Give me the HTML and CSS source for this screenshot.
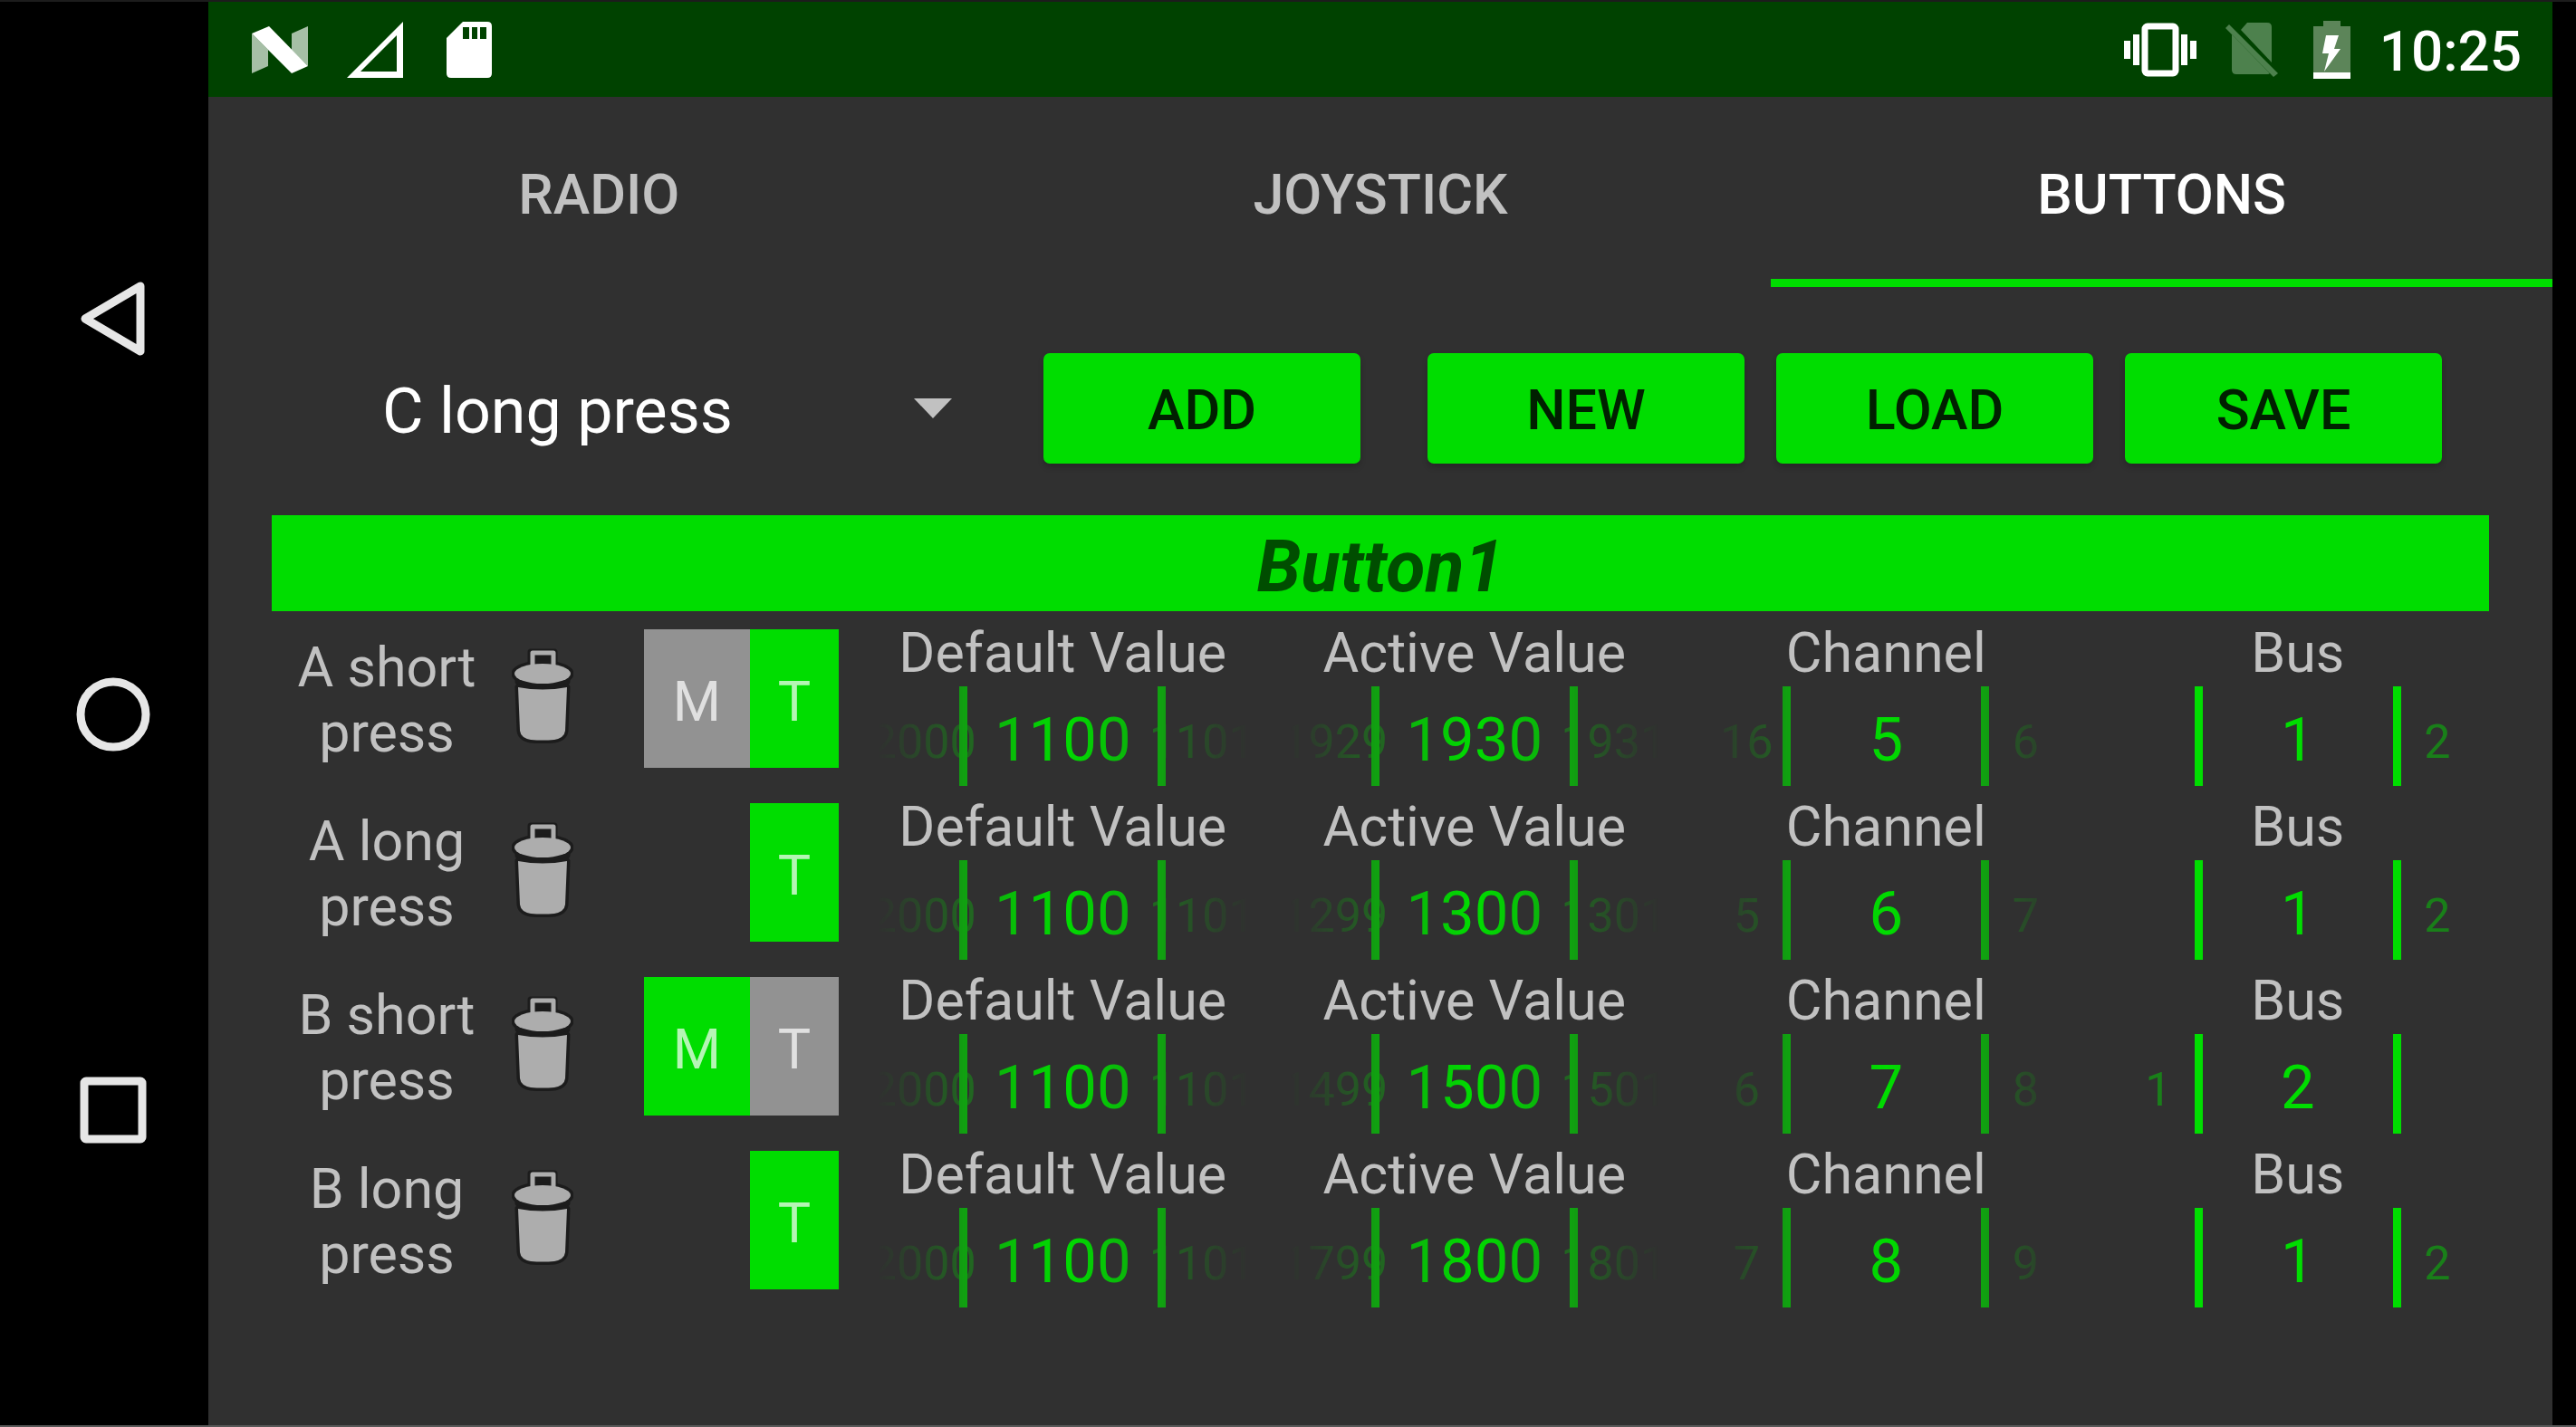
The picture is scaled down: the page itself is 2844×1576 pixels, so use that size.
FILE: index.html
```html
<!DOCTYPE html>
<html lang="en">
<head>
<meta charset="utf-8">
<title>Buttons</title>
<link rel="stylesheet" href="styles.css">
</head>
<body>
<svg class="defs" width="0" height="0" aria-hidden="true">
  <symbol id="trash" viewBox="0 0 68 108">
    <g stroke="#1c1c1c" stroke-width="7" fill="#1c1c1c" stroke-linejoin="round">
      <path d="M21 6h26v20H21z"/>
      <ellipse cx="34" cy="30" rx="31" ry="11"/>
      <path d="M7 29v10q27 10 54 0V29z"/>
      <path d="M7 45q27 6 54 0l-2 48q-1 8-12 10-13 1-26 0-11-2-12-10z"/>
    </g>
    <path d="M23 21V7h23v14" fill="none" stroke="#adadad" stroke-width="5" stroke-linejoin="round"/>
    <ellipse cx="34" cy="30" rx="31" ry="11" fill="#adadad"/>
    <path d="M7 45q27 5 54 0l-2 48q-1 8-12 10-13 1-26 0-11-2-12-10z" fill="#adadad"/>
  </symbol>
</svg>
<div class="device">
  <nav class="sysnav" aria-label="System">
    <button class="sysnav-btn" aria-label="Back"><svg width="84" height="84" viewBox="0 0 84 84"><path d="M72 6L11 42L72 78Z"/></svg></button>
    <button class="sysnav-btn" aria-label="Home"><svg width="84" height="84" viewBox="0 0 84 84"><circle cx="42" cy="42" r="36"/></svg></button>
    <button class="sysnav-btn" aria-label="Recent apps"><svg width="84" height="84" viewBox="0 0 84 84"><rect x="10" y="10" width="64" height="64" rx="2"/></svg></button>
  </nav>
  <div class="screen">
    <header class="status">
      <svg class="i-n" width="62" height="52" viewBox="0 0 62 52"><path d="M0 8L18 26V44L0 52zM44 8L62 0V44L44 26z" fill="#a6bfa6"/><path d="M0 8L19 0L62 44L44 52z" fill="#fff"/></svg>
      <svg class="i-sig" width="62" height="62" viewBox="0 0 62 62"><path d="M62 0V62H0zM55 15L15 55H55z" fill="#fff" fill-rule="evenodd"/></svg>
      <svg class="i-sd" width="50" height="62" viewBox="0 0 50 62"><path d="M18 0H45Q50 0 50 5V57Q50 62 45 62H5Q0 62 0 57V18zM18 6V19H25V6zM28 6V19H34V6zM37 6V19H44V6z" fill="#fff" fill-rule="evenodd"/></svg>
      <span class="spacer"></span>
      <svg class="i-vib" width="80" height="60" viewBox="0 0 80 60"><g fill="#fff"><rect x="0" y="20" width="7" height="20"/><rect x="10" y="13" width="7" height="34"/><rect x="63" y="13" width="7" height="34"/><rect x="73" y="20" width="7" height="20"/></g><rect x="23" y="4" width="34" height="52" rx="3" fill="none" stroke="#fff" stroke-width="7"/></svg>
      <svg class="i-sim" width="58" height="60" viewBox="0 0 58 60"><g fill="#4d814d"><path d="M17 8L24 0H46Q51 0 51 5V44z"/><path d="M7 13L49 56Q48 57 46 57H12Q7 57 7 52z"/><path d="M0 6L4 2L58 56L53 60z"/></g></svg>
      <svg class="i-bat" width="41" height="64" viewBox="0 0 41 64"><path d="M11 0H30V6H41V57H0V6H11z" fill="#5c8559"/><path d="M0 57H41V64H0z" fill="#fff"/><path d="M14 16H28L23 31H30L12 56L17 36H10z" fill="#fff"/></svg>
      <time class="clock">10:25</time>
    </header>
    <nav class="tabs" role="tablist">
      <button class="tab" role="tab">RADIO</button>
      <button class="tab" role="tab">JOYSTICK</button>
      <button class="tab tab-on" role="tab" aria-selected="true">BUTTONS</button>
    </nav>
    <main>
      <div class="toolbar">
        <div class="picker">
          <select class="select" aria-label="Button action"><option>C long press</option></select>
          <svg class="caret" width="42" height="22" viewBox="0 0 42 22"><path d="M0 0H42L21 22z" fill="#c1c1c1"/></svg>
        </div>
        <button class="btn btn-add">ADD</button>
        <button class="btn">NEW</button>
        <button class="btn">LOAD</button>
        <button class="btn">SAVE</button>
      </div>
      <h1 class="banner">Button1</h1>
      <ul class="rows">
        <li class="row">
          <span class="name">A short press</span>
          <button class="trash" aria-label="Delete A short press"><svg width="68" height="108"><use href="#trash"/></svg></button>
          <div class="modes"><button class="mode mode-m">M</button><button class="mode mode-t on">T</button></div>
          <div class="wheels">
            <div class="wheel"><span class="cap">Default Value</span><div class="reel"><span class="side">2000</span><span class="val">1100</span><span class="side">1101</span></div></div>
            <div class="wheel"><span class="cap">Active Value</span><div class="reel"><span class="side">1929</span><span class="val">1930</span><span class="side">1931</span></div></div>
            <div class="wheel"><span class="cap">Channel</span><div class="reel"><span class="side">16</span><span class="val">5</span><span class="side">6</span></div></div>
            <div class="wheel"><span class="cap">Bus</span><div class="reel flat"><span class="side"></span><span class="val">1</span><span class="side">2</span></div></div>
          </div>
        </li>
        <li class="row">
          <span class="name">A long press</span>
          <button class="trash" aria-label="Delete A long press"><svg width="68" height="108"><use href="#trash"/></svg></button>
          <div class="modes"><button class="mode mode-t on">T</button></div>
          <div class="wheels">
            <div class="wheel"><span class="cap">Default Value</span><div class="reel"><span class="side">2000</span><span class="val">1100</span><span class="side">1101</span></div></div>
            <div class="wheel"><span class="cap">Active Value</span><div class="reel"><span class="side">1299</span><span class="val">1300</span><span class="side">1301</span></div></div>
            <div class="wheel"><span class="cap">Channel</span><div class="reel"><span class="side">5</span><span class="val">6</span><span class="side">7</span></div></div>
            <div class="wheel"><span class="cap">Bus</span><div class="reel flat"><span class="side"></span><span class="val">1</span><span class="side">2</span></div></div>
          </div>
        </li>
        <li class="row">
          <span class="name">B short press</span>
          <button class="trash" aria-label="Delete B short press"><svg width="68" height="108"><use href="#trash"/></svg></button>
          <div class="modes"><button class="mode mode-m on">M</button><button class="mode mode-t">T</button></div>
          <div class="wheels">
            <div class="wheel"><span class="cap">Default Value</span><div class="reel"><span class="side">2000</span><span class="val">1100</span><span class="side">1101</span></div></div>
            <div class="wheel"><span class="cap">Active Value</span><div class="reel"><span class="side">1499</span><span class="val">1500</span><span class="side">1501</span></div></div>
            <div class="wheel"><span class="cap">Channel</span><div class="reel"><span class="side">6</span><span class="val">7</span><span class="side">8</span></div></div>
            <div class="wheel"><span class="cap">Bus</span><div class="reel flat"><span class="side">1</span><span class="val">2</span><span class="side"></span></div></div>
          </div>
        </li>
        <li class="row">
          <span class="name">B long press</span>
          <button class="trash" aria-label="Delete B long press"><svg width="68" height="108"><use href="#trash"/></svg></button>
          <div class="modes"><button class="mode mode-t on">T</button></div>
          <div class="wheels">
            <div class="wheel"><span class="cap">Default Value</span><div class="reel"><span class="side">2000</span><span class="val">1100</span><span class="side">1101</span></div></div>
            <div class="wheel"><span class="cap">Active Value</span><div class="reel"><span class="side">1799</span><span class="val">1800</span><span class="side">1801</span></div></div>
            <div class="wheel"><span class="cap">Channel</span><div class="reel"><span class="side">7</span><span class="val">8</span><span class="side">9</span></div></div>
            <div class="wheel"><span class="cap">Bus</span><div class="reel flat"><span class="side"></span><span class="val">1</span><span class="side">2</span></div></div>
          </div>
        </li>
      </ul>
    </main>
  </div>
</div>
</body>
</html>
```
FILE: styles.css
```css
* { box-sizing: border-box; }

body {
  margin: 0;
  background: #000;
  font-family: Roboto, "Liberation Sans", sans-serif;
  color: #c1c1c1;
}

button {
  margin: 0;
  padding: 0;
  border: 0;
  background: none;
  color: inherit;
  font: inherit;
}

svg { display: block; flex: none; }
.defs { position: absolute; }

.device {
  display: flex;
  min-height: 100vh;
  padding-right: 26px;
  border-top: 2px solid #1c1c1c;
  border-bottom: 2px solid #585858;
}

/* System navigation column */
.sysnav {
  flex: none;
  width: 230px;
  padding: 132px 0 130px;
  display: flex;
  flex-direction: column;
}
.sysnav-btn {
  flex: 1;
  display: flex;
  align-items: center;
  justify-content: center;
  padding-left: 20px;
}
.sysnav svg { fill: none; stroke: #e6e6e6; stroke-width: 9; stroke-linejoin: round; }

.screen { flex: 1; min-width: 0; background: #303030; }

/* Status bar */
.status {
  display: flex;
  align-items: center;
  height: 105px;
  padding: 0 34px 0 48px;
  background: #004200;
}
.spacer { flex: 1; }
.i-n { margin-right: 43px; }
.i-sig { margin-right: 48px; }
.i-vib { margin-right: 32px; }
.i-sim { margin-right: 39px; }
.i-bat { margin-right: 32px; }
.clock { font-size: 62px; line-height: 76px; font-weight: 500; color: #fff; padding-top: 5px; }

/* Tabs */
.tabs { display: flex; height: 210px; }
.tab {
  flex: 1;
  padding-top: 5px;
  border-top: 9px solid transparent;
  border-bottom: 9px solid transparent;
  font-size: 61px;
  font-weight: 500;
}
.tab-on { color: #fff; border-bottom-color: #00dd00; }

main { padding: 73px 54px 0 70px; }

/* Toolbar */
.toolbar {
  display: flex;
  gap: 35px;
  padding-right: 68px;
}
.picker {
  flex: 1;
  display: flex;
  align-items: center;
  padding: 0 66px 0 122px;
}
.select {
  flex: 1;
  min-width: 0;
  appearance: none;
  border: 0;
  padding: 6px 0 0;
  background: transparent;
  color: #fff;
  font: inherit;
  font-size: 70px;
  height: 100px;
}
.btn {
  width: 350px;
  height: 122px;
  padding-top: 3px;
  border-radius: 7px;
  background: #00dd00;
  color: #002000;
  font-size: 61px;
  font-weight: 500;
  box-shadow: 0 4px 6px rgba(0, 0, 0, 0.2);
}
.btn-add { margin-right: 39px; }

.banner {
  margin: 57px 16px 0 0;
  height: 106px;
  background: #00dd00;
  color: #004d00;
  font-size: 79px;
  line-height: 114px;
  font-weight: 700;
  font-style: italic;
  text-align: center;
}

/* Mapping rows */
.rows { list-style: none; margin: 0; padding: 17px 0 0; }
.row { display: flex; height: 192px; }
.name {
  width: 254px;
  padding: 9px 20px 0;
  font-size: 61px;
  line-height: 72px;
  text-align: center;
}
.trash { width: 90px; height: 108px; margin-top: 22px; display: flex; justify-content: center; }
.modes {
  width: 282px;
  height: 153px;
  margin: 3px 20px 0 0;
  display: flex;
  justify-content: flex-end;
}
.mode { background: #929292; color: #e0e0e0; font-size: 61px; padding-top: 6px; }
.mode-m { width: 117px; }
.mode-t { width: 98px; }
.mode.on { background: #00dd00; color: #b5f5b5; }

.wheels { flex: 1; display: grid; grid-template-columns: repeat(4, 1fr); }
.wheel { display: flex; flex-direction: column; align-items: stretch; text-align: center; }
.cap { font-size: 61px; line-height: 58px; padding-bottom: 8px; }
.reel {
  display: flex;
  justify-content: center;
  align-items: center;
  height: 110px;
  color: #00dd00;
  -webkit-mask-image: linear-gradient(to right, transparent 5%, rgba(0, 0, 0, 0.65) 26%, #000 50%, rgba(0, 0, 0, 0.65) 74%, transparent 95%);
  mask-image: linear-gradient(to right, transparent 5%, rgba(0, 0, 0, 0.65) 26%, #000 50%, rgba(0, 0, 0, 0.65) 74%, transparent 95%);
}
.reel.flat { -webkit-mask-image: none; mask-image: none; }
.val {
  width: 228px;
  border: solid #00dd00;
  border-width: 0 9px;
  font-size: 67px;
  line-height: 110px;
  padding-top: 4px;
  height: 110px;
}
.side { width: 80px; display: flex; justify-content: center; font-size: 52px; line-height: 60px; opacity: 0.46; padding-top: 14px; }
```
